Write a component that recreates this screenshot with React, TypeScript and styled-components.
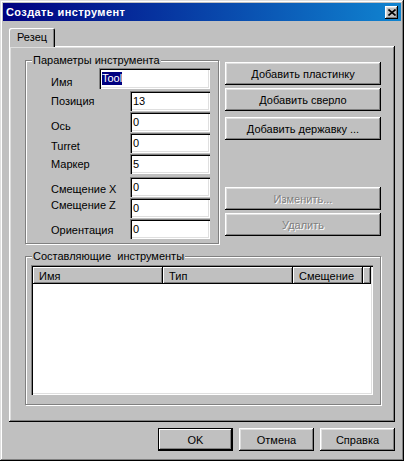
import React from 'react';
import styled, { createGlobalStyle } from 'styled-components';

const face = '#c0c0c0';

const GlobalStyle = createGlobalStyle`
  html, body {
    margin: 0;
    padding: 0;
    background: ${face};
  }
  body {
    font-family: "Liberation Sans", Arial, sans-serif;
    font-size: 11px;
    color: #000;
  }
  * {
    box-sizing: border-box;
  }
`;

const raisedShadow = `inset -1px -1px #000, inset 1px 1px #fff, inset -2px -2px #808080, inset 2px 2px #dfdfdf`;
const sunkenShadow = `inset 1px 1px #808080, inset 2px 2px #000, inset -1px -1px #fff, inset -2px -2px #dfdfdf`;

const Window = styled.div`
  width: 404px;
  height: 461px;
  padding: 3px;
  display: flex;
  flex-direction: column;
  background: ${face};
  box-shadow: inset -1px -1px #000, inset 1px 1px #dfdfdf, inset -2px -2px #808080, inset 2px 2px #fff;
`;

const TitleBar = styled.div`
  height: 18px;
  display: flex;
  align-items: center;
  justify-content: space-between;
  padding: 0 3px 0 3px;
  background: linear-gradient(to right, #000080, #1084d0);
`;

const Title = styled.span`
  color: #fff;
  font-weight: bold;
  font-size: 11px;
  letter-spacing: 0.4px;
`;

const CloseButton = styled.div`
  width: 13px;
  height: 13px;
  display: flex;
  align-items: center;
  justify-content: center;
  background: ${face};
  box-shadow: ${raisedShadow};
`;

const Body = styled.div`
  flex: 1;
  display: flex;
  flex-direction: column;
  padding: 7px 6px 7px 6px;
`;

const TabStrip = styled.div`
  height: 18px;
  display: flex;
  align-items: flex-end;
`;

const Tab = styled.div`
  position: relative;
  z-index: 1;
  width: 46px;
  height: 19px;
  margin-bottom: -1px;
  padding: 3px 0 0 8px;
  background: ${face};
  border-top-left-radius: 2px;
  border-top-right-radius: 2px;
  box-shadow: inset 1px 1px #fff, inset -1px 0 #000, inset -2px 0 #808080;
`;

const TabPanel = styled.div`
  height: 376px;
  display: flex;
  flex-direction: column;
  gap: 12px;
  padding: 14px 14px 17px 16px;
  box-shadow: ${raisedShadow};
`;

const TopSection = styled.div`
  display: flex;
  gap: 6px;
`;

const GroupBox = styled.div<{ $width: number; $height: number }>`
  position: relative;
  width: ${(p) => p.$width}px;
  height: ${(p) => p.$height}px;
  border: 1px solid #808080;
  box-shadow: inset 1px 1px #fff, 1px 1px #fff;
`;

const Legend = styled.span`
  position: absolute;
  top: -7px;
  left: 6px;
  padding: 0 1px;
  line-height: 13px;
  background: ${face};
  white-space: pre;
`;

const FieldList = styled.div`
  display: flex;
  flex-direction: column;
  padding: 7px 8px 0 25px;
`;

const FieldRow = styled.div<{ $mt: number; $h: number }>`
  display: flex;
  align-items: center;
  justify-content: space-between;
  height: ${(p) => p.$h}px;
  margin-top: ${(p) => p.$mt}px;
`;

const Label = styled.span<{ $dy: number }>`
  position: relative;
  top: ${(p) => p.$dy}px;
`;

const Field = styled.div<{ $wide?: boolean }>`
  width: ${(p) => (p.$wide ? 111 : 80)}px;
  height: 100%;
  display: flex;
  align-items: center;
  padding: 0 2px 0 3px;
  background: #fff;
  box-shadow: ${sunkenShadow};
`;

const Selected = styled.span`
  background: #000080;
  color: #fff;
  padding: 0 0 1px 0;
`;

const ButtonColumn = styled.div`
  display: flex;
  flex-direction: column;
  padding-top: 2px;
`;

const Button = styled.div<{ $mt?: number; $width?: number; $disabled?: boolean; $default?: boolean }>`
  width: ${(p) => p.$width ?? 156}px;
  height: 23px;
  margin-top: ${(p) => p.$mt ?? 0}px;
  display: flex;
  align-items: center;
  justify-content: center;
  background: ${face};
  color: ${(p) => (p.$disabled ? '#808080' : '#000')};
  text-shadow: ${(p) => (p.$disabled ? '1px 1px 0 #fff' : 'none')};
  box-shadow: ${(p) =>
    p.$default
      ? 'inset 0 0 0 1px #000, inset -2px -2px #000, inset 2px 2px #fff, inset -3px -3px #808080'
      : raisedShadow};
`;

const ListGroupBody = styled.div`
  padding: 8px 0 0 5px;
`;

const ListView = styled.div`
  width: 342px;
  height: 130px;
  padding: 2px;
  background: #fff;
  box-shadow: ${sunkenShadow};
`;

const Header = styled.div`
  display: flex;
  height: 17px;
`;

const HeaderCell = styled.div<{ $width?: number }>`
  ${(p) => (p.$width ? `width: ${p.$width}px;` : 'flex: 1;')}
  height: 100%;
  display: flex;
  align-items: center;
  padding-left: 6px;
  background: ${face};
  box-shadow: inset -1px -1px #000, inset 1px 1px #fff, inset -2px -2px #808080;
`;

const Footer = styled.div`
  display: flex;
  justify-content: flex-end;
  gap: 6px;
  padding-top: 6px;
`;

const fields = [
  { label: 'Позиция', value: '13', mt: 2, dy: 0 },
  { label: 'Ось', value: '0', mt: 1, dy: 4 },
  { label: 'Turret', value: '0', mt: 1, dy: 3 },
  { label: 'Маркер', value: '5', mt: 1, dy: 0 },
  { label: 'Смещение X', value: '0', mt: 3, dy: 2 },
  { label: 'Смещение Z', value: '0', mt: 1, dy: -3 },
  { label: 'Ориентация', value: '0', mt: 1, dy: 1 },
];

export default function App() {
  return (
    <>
      <GlobalStyle />
      <Window>
        <TitleBar>
          <Title>Создать инструмент</Title>
          <CloseButton>
            <svg width="8" height="7" viewBox="0 0 8 7">
              <path d="M0.5 0.5L7.5 6.5M7.5 0.5L0.5 6.5" stroke="#000" strokeWidth="1.6" />
            </svg>
          </CloseButton>
        </TitleBar>
        <Body>
          <TabStrip>
            <Tab>Резец</Tab>
          </TabStrip>
          <TabPanel>
            <TopSection>
              <GroupBox $width={194} $height={184}>
                <Legend>Параметры инструмента</Legend>
                <FieldList>
                  <FieldRow $mt={0} $h={21}>
                    <Label $dy={3}>Имя</Label>
                    <Field $wide>
                      <Selected>Tool</Selected>
                    </Field>
                  </FieldRow>
                  {fields.map((f) => (
                    <FieldRow key={f.label} $mt={f.mt} $h={20}>
                      <Label $dy={f.dy}>{f.label}</Label>
                      <Field>{f.value}</Field>
                    </FieldRow>
                  ))}
                </FieldList>
              </GroupBox>
              <ButtonColumn>
                <Button>Добавить пластинку</Button>
                <Button $mt={3}>Добавить сверло</Button>
                <Button $mt={6}>Добавить державку ...</Button>
                <Button $mt={47} $disabled>
                  Изменить...
                </Button>
                <Button $mt={3} $disabled>
                  Удалить
                </Button>
              </ButtonColumn>
            </TopSection>
            <GroupBox $width={356} $height={149}>
              <Legend>Составляющие  инструменты</Legend>
              <ListGroupBody>
                <ListView>
                  <Header>
                    <HeaderCell $width={130}>Имя</HeaderCell>
                    <HeaderCell $width={130}>Тип</HeaderCell>
                    <HeaderCell $width={70}>Смещение</HeaderCell>
                    <HeaderCell />
                  </Header>
                </ListView>
              </ListGroupBody>
            </GroupBox>
          </TabPanel>
          <Footer>
            <Button $width={75} $default>
              OK
            </Button>
            <Button $width={75}>Отмена</Button>
            <Button $width={75}>Справка</Button>
          </Footer>
        </Body>
      </Window>
    </>
  );
}
